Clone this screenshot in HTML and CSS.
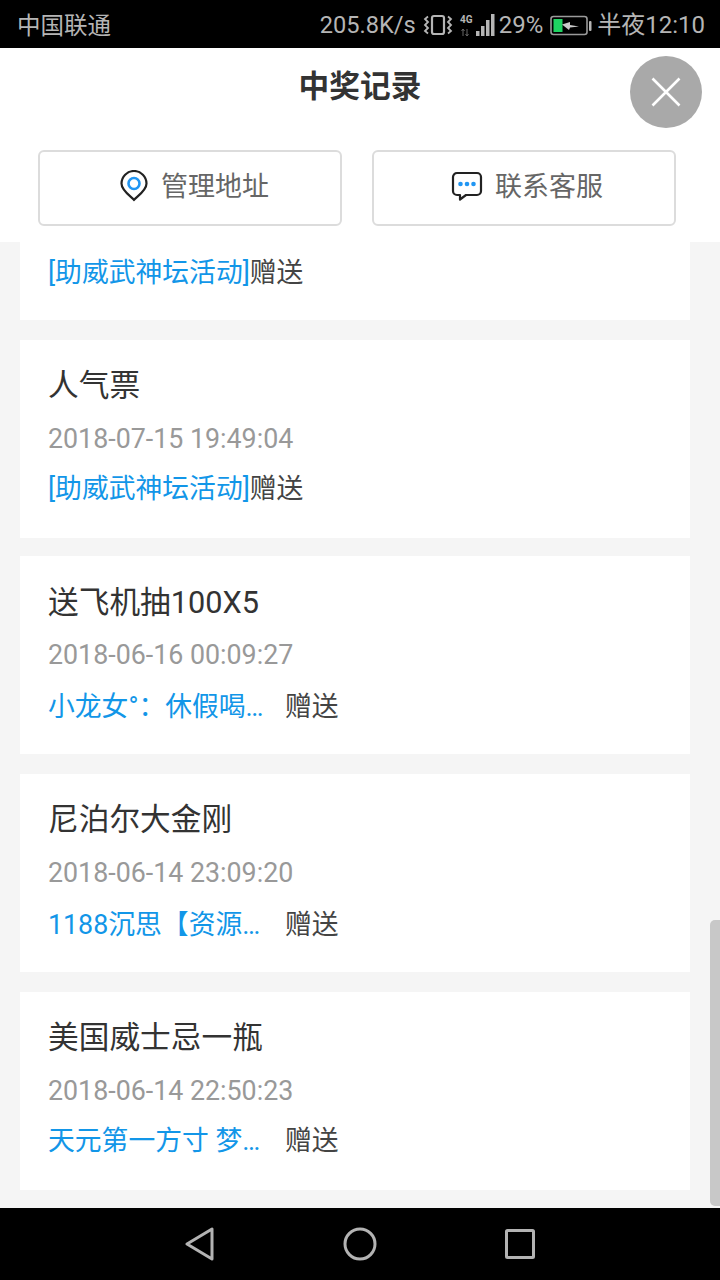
FILE: index.html
```html
<!DOCTYPE html>
<html lang="zh">
<head>
<meta charset="utf-8">
<title>中奖记录</title>
<link rel="stylesheet" href="styles.css">
</head>
<body>
<div class="app">
  <div class="status">
    <span class="carrier">中国联通</span>
    <div class="status-right">
      <span class="speed">205.8K/s</span>
      <svg class="ic-vib" width="30" height="24" viewBox="0 0 30 24" fill="none" stroke="#b5b5b5"><rect x="9" y="3" width="12" height="18" rx="2" stroke-width="2.2"/><path d="M5 3.500 L2 6 L5 9 L2 12 L5 15 L2 18 L5 20.500 M25 3.500 L28 6 L25 9 L28 12 L25 15 L28 18 L25 20.500" stroke-width="1.800"/></svg>
      <svg class="ic-sig" width="37" height="24" viewBox="0 0 37 24"><text x="1" y="10" class="t4g">4G</text><path d="M4 16v7M2.500 18l1.500-2 1.500 2M8 16v7M6.500 21l1.500 2 1.500-2" stroke="#666" fill="none" stroke-width="1"/><rect x="17" y="18" width="3.500" height="5" fill="#b5b5b5"/><rect x="22" y="13" width="3.500" height="10" fill="#b5b5b5"/><rect x="27" y="7" width="3.500" height="16" fill="#b5b5b5"/><rect x="32" y="1" width="3.500" height="22" fill="#b5b5b5"/></svg>
      <span class="pct">29%</span>
      <svg class="ic-bat" width="42" height="22" viewBox="0 0 42 22"><rect x="1" y="1.500" width="36" height="18" rx="2.500" fill="none" stroke="#9a9a9a" stroke-width="1.600"/><rect x="3.500" y="4" width="9" height="13" fill="#1fd462"/><path d="M12 9.500 L20 7 L20 10 L29 11.500 L20 12.500 L19 15 Z" fill="#c9c9c9"/><rect x="39" y="6" width="2.500" height="10" rx="1" fill="#b5b5b5"/></svg>
      <span class="clock">半夜12:10</span>
    </div>
  </div>

  <header class="head">
    <div class="title-row">
      <h1 class="title">中奖记录</h1>
      <button class="close" aria-label="关闭">
        <svg width="32" height="32" viewBox="0 0 32 32" stroke="#fff" stroke-width="2.600" fill="none"><path d="M2.500 2.500 L29.500 29.500 M29.500 2.500 L2.500 29.500"/></svg>
      </button>
    </div>
    <div class="actions">
      <div class="action action-addr">
        <svg width="30" height="32" viewBox="0 0 30 32" fill="none"><path d="M15 30 C13 27 2.500 21 2.500 13.500 A12.500 12.500 0 0 1 27.500 13.500 C27.500 21 17 27 15 30 Z" stroke="#222" stroke-width="2.200" stroke-linejoin="round"/><circle cx="15" cy="13.500" r="5.500" stroke="#2196f3" stroke-width="2.600"/></svg>
        <span>管理地址</span>
      </div>
      <div class="action action-help">
        <svg width="32" height="30" viewBox="0 0 32 30" fill="none"><path d="M6 2 H26 A4 4 0 0 1 30 6 V20 A4 4 0 0 1 26 24 H15 L9 28.500 V24 H6 A4 4 0 0 1 2 20 V6 A4 4 0 0 1 6 2 Z" stroke="#222" stroke-width="2.200" stroke-linejoin="round"/><circle cx="9.500" cy="13" r="2.300" fill="#2196f3"/><circle cx="16" cy="13" r="2.300" fill="#2196f3"/><circle cx="22.500" cy="13" r="2.300" fill="#2196f3"/></svg>
        <span>联系客服</span>
      </div>
    </div>
  </header>

  <main class="list">
    <section class="card card-cut">
      <p class="from"><span class="blue">[助威武神坛活动]</span>赠送</p>
    </section>
    <section class="card">
      <h2 class="name">人气票</h2>
      <p class="date">2018-07-15 19:49:04</p>
      <p class="from from-a"><span class="blue">[助威武神坛活动]</span>赠送</p>
    </section>
    <section class="card card-tight">
      <h2 class="name">送飞机抽100X5</h2>
      <p class="date">2018-06-16 00:09:27</p>
      <p class="from from-b"><span class="blue clip">小龙女°：休假喝…</span><span>赠送</span></p>
    </section>
    <section class="card">
      <h2 class="name">尼泊尔大金刚</h2>
      <p class="date">2018-06-14 23:09:20</p>
      <p class="from from-b"><span class="blue clip">1188沉思【资源…</span><span>赠送</span></p>
    </section>
    <section class="card">
      <h2 class="name">美国威士忌一瓶</h2>
      <p class="date">2018-06-14 22:50:23</p>
      <p class="from from-a"><span class="blue clip">天元第一方寸 梦…</span><span>赠送</span></p>
    </section>
    <div class="scrollbar"></div>
  </main>

  <nav class="navbar">
    <svg width="30" height="34" viewBox="0 0 30 34" fill="none" stroke="#b3b3b3" stroke-width="3" stroke-linejoin="round"><path d="M27 2 V32 L2 17 Z"/></svg>
    <svg width="34" height="34" viewBox="0 0 34 34" fill="none" stroke="#b3b3b3" stroke-width="3"><circle cx="17" cy="17" r="15"/></svg>
    <svg width="30" height="30" viewBox="0 0 30 30" fill="none" stroke="#b3b3b3" stroke-width="3" stroke-linejoin="round"><rect x="1.500" y="1.500" width="27" height="27" rx="1"/></svg>
  </nav>
</div>
</body>
</html>
```

FILE: styles.css
```css
* { box-sizing: border-box; }
html, body { margin: 0; padding: 0; }
body {
  width: 720px;
  height: 1280px;
  overflow: hidden;
  font-family: "Roboto", "Noto Sans CJK SC", sans-serif;
  background: #f5f5f5;
}
.app { display: flex; flex-direction: column; width: 720px; height: 1280px; }

.status {
  height: 48px;
  flex: none;
  background: #000;
  color: #b5b5b5;
  display: flex;
  align-items: center;
  justify-content: space-between;
  padding: 0 15px 0 17px;
  font-size: 24px;
}
.carrier { font-size: 23.500px; }
.status-right { display: flex; align-items: center; }
.speed { font-size: 23.600px; margin-right: 7px; padding-top: 2px; }
.ic-vib { margin-top: 1px; }
.ic-sig { margin-left: 6px; margin-top: 1px; }
.t4g { font: bold 10px "Roboto", sans-serif; fill: #b5b5b5; }
.pct { margin-left: 3px; margin-right: 7px; padding-top: 2px; }
.ic-bat { margin-right: 5px; margin-top: 3px; }
.clock { padding-bottom: 3px; }

.head { height: 194px; flex: none; background: #fff; }
.title-row {
  height: 102px;
  padding: 8px 18px 0 0;
  display: flex;
  justify-content: flex-end;
  align-items: flex-start;
  position: relative;
}
.title {
  position: absolute;
  left: 0;
  right: 0;
  top: 17px;
  margin: 0;
  text-align: center;
  font-size: 30.700px;
  line-height: 44px;
  font-weight: 700;
  color: #333;
}
.close {
  width: 72px;
  height: 72px;
  border: 0;
  padding: 0;
  border-radius: 50%;
  background: #a9a9a9;
  display: flex;
  align-items: center;
  justify-content: center;
  position: relative;
}
.actions { display: flex; gap: 30px; padding-left: 38px; }
.action {
  width: 304px;
  height: 76px;
  border: 2px solid #dcdcdc;
  border-radius: 6px;
  display: flex;
  align-items: center;
  justify-content: center;
  gap: 12px;
  font-size: 27px;
  color: #666;
}
.action-addr { padding-left: 8px; }
.action-help { padding-left: 6px; }
.action span { padding-bottom: 8px; }
.action svg { margin-bottom: 4px; }

.list {
  flex: 1;
  min-height: 0;
  position: relative;
  overflow: hidden;
  padding: 0 30px 0 20px;
  display: flex;
  flex-direction: column;
  gap: 20px;
}
.card {
  height: 198px;
  flex: none;
  background: #fff;
  padding: 0 28px;
}
.card-cut { height: 78px; }
.card-tight { margin-top: -2px; }
.name {
  margin: 0;
  padding-top: 25px;
  height: 75px;
  font-size: 30.700px;
  line-height: 42px;
  font-weight: 400;
  color: #333;
}
.card-tight .name { padding-top: 26px; }
.date {
  margin: 0;
  height: 50px;
  font-size: 26.800px;
  line-height: 48px;
  color: #999;
}
.from {
  margin: 0;
  display: flex;
  font-size: 26.800px;
  line-height: 40px;
  color: #444;
}
.from-a { padding-top: 4px; }
.from-b { padding-top: 6px; }
.card-cut .from { padding-top: 11px; }
.blue { color: #1296e8; }
.clip {
  display: block;
  width: 237px;
  white-space: nowrap;
}
.scrollbar {
  position: absolute;
  right: 0;
  bottom: 2px;
  width: 10px;
  height: 286px;
  background: #c8c8c8;
  border-radius: 5px 0 0 5px;
}

.navbar {
  height: 72px;
  flex: none;
  background: #000;
  display: flex;
  align-items: center;
  padding-left: 185px;
}
.navbar svg:nth-child(2) { margin-left: 128px; }
.navbar svg:nth-child(3) { margin-left: 128px; }
```
